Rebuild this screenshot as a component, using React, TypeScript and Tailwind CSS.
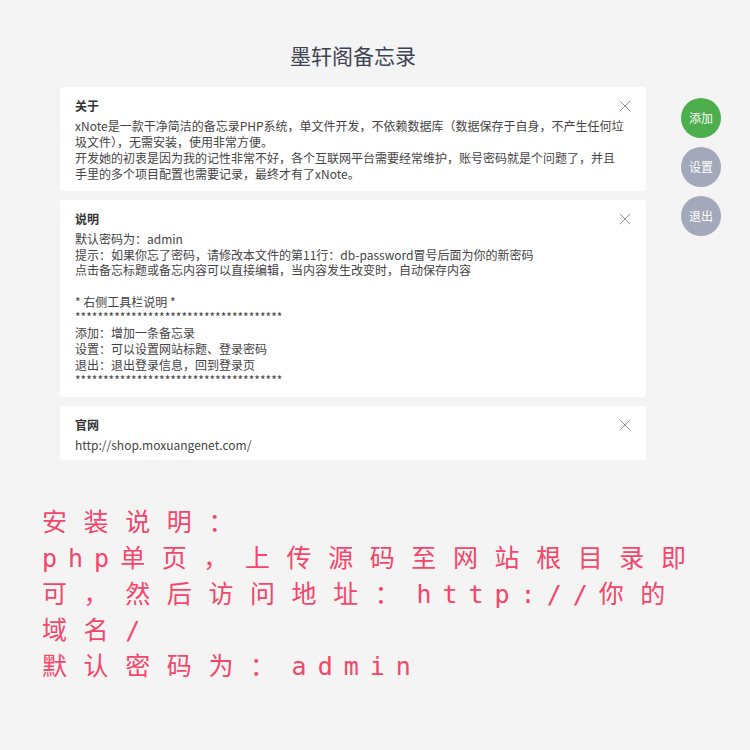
import { X } from "lucide-react";

const cn = '"Noto Sans CJK SC", "Microsoft YaHei", sans-serif';
const stars = "*************************************";

const notes = [
  {
    title: "关于",
    lh: "h-[16px]",
    pb: "pb-[9px]",
    lines: [
      "xNote是一款干净简洁的备忘录PHP系统，单文件开发，不依赖数据库（数据保存于自身，不产生任何垃",
      "圾文件），无需安装，使用非常方便。",
      "开发她的初衷是因为我的记性非常不好，各个互联网平台需要经常维护，账号密码就是个问题了，并且",
      "手里的多个项目配置也需要记录，最终才有了xNote。",
    ],
  },
  {
    title: "说明",
    lh: "h-[15.7px]",
    pb: "pb-[9px]",
    lines: [
      "默认密码为：admin",
      "提示：如果你忘了密码，请修改本文件的第11行：db-password冒号后面为你的新密码",
      "点击备忘标题或备忘内容可以直接编辑，当内容发生改变时，自动保存内容",
      "",
      "* 右侧工具栏说明 *",
      stars,
      "添加：增加一条备忘录",
      "设置：可以设置网站标题、登录密码",
      "退出：退出登录信息，回到登录页",
      stars,
    ],
  },
  {
    title: "官网",
    lh: "h-[16px]",
    pb: "pb-[7px]",
    lines: ["http://shop.moxuangenet.com/"],
  },
];

function NoteCard({ title, lines, lh, pb }: { title: string; lines: string[]; lh: string; pb: string }) {
  return (
    <div className={`relative rounded-[3px] bg-white pt-[11px] pl-[15px] pr-[10px] ${pb}`}>
      <div className="mb-[4px] text-[12px] font-bold leading-[16px] text-[#333]">{title}</div>
      <div className="text-[12px] leading-[16px] text-[#444]">
        {lines.map((line, i) => (
          <div key={i} className={`whitespace-nowrap ${lh}`}>
            {line}
          </div>
        ))}
      </div>
      <X className="absolute right-[11px] top-[9px] size-[20px] text-[#8a8a8a]" strokeWidth={1.1} />
    </div>
  );
}

function Latin({ children }: { children: string }) {
  return <span className="font-['DejaVu_Sans_Mono'] tracking-[11px]">{children}</span>;
}

function RedLine({ children }: { children: React.ReactNode }) {
  return <div className="h-[36px] whitespace-nowrap leading-[36px]">{children}</div>;
}

export default function App() {
  return (
    <div className="min-h-[750px] bg-[#f4f4f4]" style={{ fontFamily: cn }}>
      <div className="flex pl-[60px] pt-[41px]">
        <div className="w-[586px]">
          <h1 className="text-center text-[21px] leading-[28px] text-[#3c4353]">墨轩阁备忘录</h1>
          <div className="mt-[18px] flex flex-col gap-[9px]">
            {notes.map((n) => (
              <NoteCard key={n.title} title={n.title} lines={n.lines} lh={n.lh} pb={n.pb} />
            ))}
          </div>
        </div>
        <div className="ml-[35px] mt-[57px] flex flex-col gap-[9px]">
          <button className="flex size-[40px] items-center justify-center rounded-full bg-[#4cae4c] text-[12px] text-white">
            添加
          </button>
          <button className="flex size-[40px] items-center justify-center rounded-full bg-[#a3a8ba] text-[12px] text-white">
            设置
          </button>
          <button className="flex size-[40px] items-center justify-center rounded-full bg-[#a3a8ba] text-[12px] text-white">
            退出
          </button>
        </div>
      </div>
      <div className="mt-[42px] pl-[42px] text-[25px] tracking-[16.6px] text-[#f4466a]">
        <RedLine>安装说明：</RedLine>
        <RedLine>
          <Latin>php</Latin>单页，上传源码至网站根目录即
        </RedLine>
        <RedLine>
          可，然后访问地址：<Latin>http://</Latin>你的
        </RedLine>
        <RedLine>
          域名<Latin>/</Latin>
        </RedLine>
        <RedLine>
          默认密码为：<Latin>admin</Latin>
        </RedLine>
      </div>
    </div>
  );
}
